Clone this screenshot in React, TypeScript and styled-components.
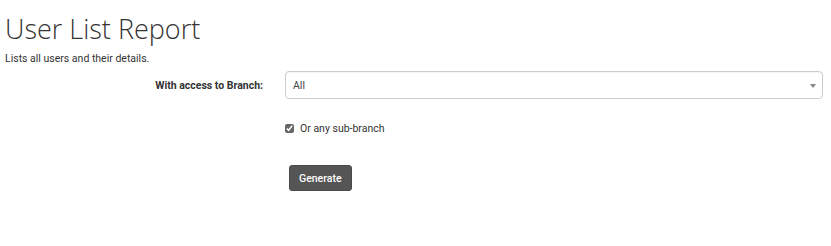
import React, { useState } from "react";
import styled, { createGlobalStyle } from "styled-components";

const GlobalStyle = createGlobalStyle`
  html, body {
    margin: 0;
    padding: 0;
    background: #fff;
    font-family: Roboto, "Liberation Sans", sans-serif;
    color: #333;
  }
`;

const Page = styled.div`
  padding: 11px 8px 0 5px;
`;

const Title = styled.h1`
  margin: 0;
  font-family: "Open Sans", "Liberation Sans", sans-serif;
  font-weight: 300;
  font-size: 27px;
  line-height: 36px;
  color: #333;
`;

const Subtitle = styled.p`
  margin: 5px 0 0;
  font-size: 10.5px;
  line-height: 14px;
  color: #333;
`;

const Form = styled.form`
  display: grid;
  grid-template-columns: 258px 1fr;
  column-gap: 22px;
  row-gap: 20px;
  margin-top: 5px;
  align-items: center;
`;

const Label = styled.label`
  font-size: 10.5px;
  font-weight: 700;
  text-align: right;
  color: #333;
`;

const SelectBox = styled.div`
  position: relative;
  height: 26px;
  border: 1px solid #ccc;
  border-radius: 4px;
  display: flex;
  align-items: center;
  padding: 0 7px;
  font-size: 10.5px;
  color: #444;
  box-shadow: inset 0 1px 1px rgba(0, 0, 0, 0.04);
`;

const Caret = styled.span`
  position: absolute;
  right: 6px;
  top: 50%;
  margin-top: -1px;
  border-left: 3px solid transparent;
  border-right: 3px solid transparent;
  border-top: 4px solid #888;
`;

const CheckRow = styled.label`
  grid-column: 2;
  display: flex;
  align-items: center;
  gap: 6px;
  font-size: 10.5px;
  color: #333;
  margin-top: 3px;
`;

const Check = styled.input`
  margin: 0;
  width: 9px;
  height: 9px;
  accent-color: #666;
`;

const ButtonCell = styled.div`
  grid-column: 2;
  padding-left: 4px;
  margin-top: 10px;
`;

const Button = styled.button`
  height: 26px;
  padding: 0 9px;
  background: #555;
  border: 1px solid #4a4a4a;
  border-radius: 3px;
  color: #fff;
  font-family: Roboto, "Liberation Sans", sans-serif;
  font-size: 10.5px;
  font-weight: 500;
  cursor: pointer;
`;

export default function App() {
  const [sub, setSub] = useState(true);
  return (
    <>
      <GlobalStyle />
      <Page>
        <Title>User List Report</Title>
        <Subtitle>Lists all users and their details.</Subtitle>
        <Form onSubmit={(e) => e.preventDefault()}>
          <Label>With access to Branch:</Label>
          <SelectBox>
            All
            <Caret />
          </SelectBox>
          <CheckRow>
            <Check
              type="checkbox"
              checked={sub}
              onChange={() => setSub((v) => !v)}
            />
            Or any sub-branch
          </CheckRow>
          <ButtonCell>
            <Button type="submit">Generate</Button>
          </ButtonCell>
        </Form>
      </Page>
    </>
  );
}
